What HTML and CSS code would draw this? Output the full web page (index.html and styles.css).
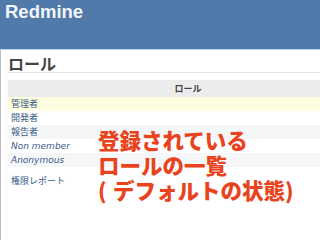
FILE: index.html
```html
<!DOCTYPE html>
<html lang="ja">
<head>
<meta charset="utf-8">
<title>Redmine ロール</title>
<link rel="stylesheet" href="styles.css">
</head>
<body>
<div class="header"><span class="logo">Redmine</span></div>
<div class="main">
  <h2 class="title">ロール</h2>
  <table class="list">
    <thead><tr><th>ロール</th></tr></thead>
    <tbody>
      <tr class="hl"><td><a>管理者</a></td></tr>
      <tr class="even"><td><a>開発者</a></td></tr>
      <tr class="odd"><td><a>報告者</a></td></tr>
      <tr class="even"><td><a class="builtin">Non member</a></td></tr>
      <tr class="odd"><td><a class="builtin">Anonymous</a></td></tr>
    </tbody>
  </table>
  <p class="report"><a>権限レポート</a></p>
  <div class="callout">登録されている<br>ロールの一覧<br><span class="po">(</span>デフォルトの状態<span class="pc">)</span></div>
</div>
</body>
</html>
```
FILE: styles.css
```css
html, body {
  margin: 0;
  padding: 0;
  width: 320px;
  height: 240px;
  overflow: hidden;
  background: #fff;
  font-family: "DejaVu Sans", "Noto Sans CJK JP", sans-serif;
}
.header {
  height: 49px;
  background: #507aaa;
  border-bottom: 1px solid #c3d5e9;
  padding-left: 5px;
}
.logo {
  display: block;
  padding-top: 2px;
  font-family: "Liberation Sans", "Noto Sans", sans-serif;
  font-weight: bold;
  font-size: 18.5px;
  line-height: 20px;
  color: #f2f5f9;
}
.main {
  position: relative;
  height: 190px;
  border-left: 1px solid #bdbdbd;
  padding: 4px 0 0 7px;
  box-sizing: border-box;
  overflow: hidden;
}
.title {
  margin: 0;
  font-family: "Noto Sans CJK JP", sans-serif;
  font-size: 16px;
  line-height: 18px;
  font-weight: bold;
  color: #444;
  border-bottom: 1px solid #e2e2e2;
}
.list {
  margin-top: 7px;
  width: 100%;
  border-collapse: collapse;
  font-size: 9px;
}
.list th {
  height: 17px;
  padding: 0 0 0 48px;
  background: #ececec;
  color: #444;
  font-weight: bold;
  font-family: "Noto Sans CJK JP", sans-serif;
  font-size: 9px;
  text-align: center;
}
.list td {
  height: 14px;
  padding: 0 0 0 3px;
  line-height: 14px;
}
.list tr.hl { background: #fdfde0; }
.list tr.odd { background: #f5f6f7; }
.list tr.even { background: #fff; }
a {
  color: #3a5c87;
  text-decoration: none;
}
.builtin {
  font-style: italic;
}
.report {
  margin: 7px 0 0 3px;
  font-size: 9px;
  line-height: 14px;
}
.callout {
  position: absolute;
  left: 97px;
  top: 77px;
  font-family: "Noto Sans CJK JP", sans-serif;
  font-weight: 900;
  font-size: 21.5px;
  line-height: 25px;
  color: #e8431d;
  white-space: nowrap;
}
.po, .pc {
  display: inline-block;
  width: 15px;
}
```
